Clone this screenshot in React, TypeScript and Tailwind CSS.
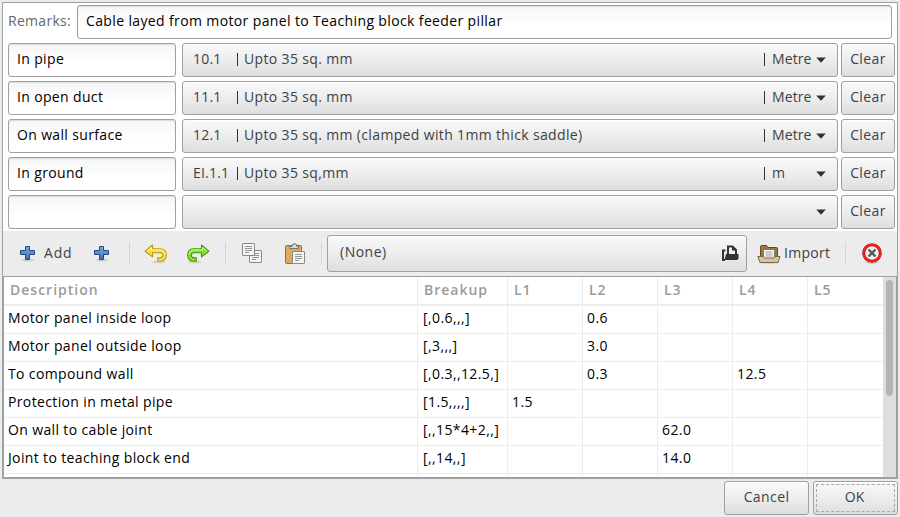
import React from "react";

const ITEMS = [
  { name: "In pipe", code: "10.1", text: "Upto 35 sq. mm", unit: "Metre" },
  { name: "In open duct", code: "11.1", text: "Upto 35 sq. mm", unit: "Metre" },
  { name: "On wall surface", code: "12.1", text: "Upto 35 sq. mm (clamped with 1mm thick saddle)", unit: "Metre" },
  { name: "In ground", code: "EI.1.1", text: "Upto 35 sq,mm", unit: "m" },
  { name: "", code: "", text: "", unit: "" },
];

const HEAD = ["Description", "Breakup", "L1", "L2", "L3", "L4", "L5"];

const ROWS = [
  ["Motor panel inside loop", "[,0.6,,,]", "", "0.6", "", "", ""],
  ["Motor panel outside loop", "[,3,,,]", "", "3.0", "", "", ""],
  ["To compound wall", "[,0.3,,12.5,]", "", "0.3", "", "12.5", ""],
  ["Protection in metal pipe", "[1.5,,,,]", "1.5", "", "", "", ""],
  ["On wall to cable joint", "[,,15*4+2,,]", "", "", "62.0", "", ""],
  ["Joint to teaching block end", "[,,14,,]", "", "", "14.0", "", ""],
  ["", "", "", "", "", "", ""],
];

const ENTRY =
  "border border-[#a0a0a0] rounded-[3px] bg-linear-to-b from-[#f5f5f5] to-white to-60% shadow-[inset_0_1px_1px_#dcdcdc] text-black";
const BUTTON =
  "border border-[#a0a0a0] rounded-[3px] bg-linear-to-b from-[#f9f9f9] via-[#ededed] to-[#dedede] shadow-[inset_0_1px_0_#ffffff]";

function Arrow() {
  return (
    <svg className="block" width="10" height="6" viewBox="0 0 10 6">
      <path d="M0.2 0.5H9.8L5 5.7Z" fill="#2e3436" />
    </svg>
  );
}

function Plus() {
  return (
    <svg className="block" width="16" height="17" viewBox="0 0 16 17">
      <defs>
        <linearGradient id="plus" x2="0" y2="1">
          <stop offset="0" stopColor="#7da7d8" />
          <stop offset="1" stopColor="#3f6fad" />
        </linearGradient>
      </defs>
      <ellipse cx="8" cy="15" rx="6" ry="1.6" fill="#000" opacity=".12" />
      <path d="M5.5 1.5h4v4h5v4h-5v5h-4v-5h-5v-4h5z" fill="url(#plus)" stroke="#204a87" strokeLinejoin="round" />
    </svg>
  );
}

function Undo({ redo = false }: { redo?: boolean }) {
  const edge = redo ? "#3e9a06" : "#bd9a00";
  const fill = redo ? "#8ae234" : "#f7e04a";
  return (
    <svg className={redo ? "block -scale-x-100" : "block"} width="24" height="20" viewBox="0 0 24 20">
      <ellipse cx="15" cy="18" rx="7" ry="1.3" fill="#000" opacity=".1" />
      <path
        d="M1.2 7.2 8.5 1v3.7h7.5c4 0 6.3 2.6 6.3 6.2 0 3.8-2.6 6.3-6.6 6.3h-2v-3.3h2c2 0 3.1-1.1 3.1-2.8s-1.1-2.4-2.8-2.4H8.5v4.2z"
        fill={fill}
        stroke={edge}
        strokeWidth="1.1"
        strokeLinejoin="round"
      />
      <path d="M3 7.2 7.5 3.3v2.5H16c3 0 5 1.8 5.2 4.6" fill="none" stroke="#fff" opacity=".65" />
    </svg>
  );
}

function Page({ x, y, w, h }: { x: number; y: number; w: number; h: number }) {
  return (
    <g>
      <rect x={x} y={y} width={w} height={h} rx="0.5" fill="#f4f4f2" stroke="#888a85" />
      <path d={`M${x + 2.5} ${y + 3}h7M${x + 2.5} ${y + 5}h7M${x + 2.5} ${y + 7}h7M${x + 2.5} ${y + 9}h4`} stroke="#959792" />
    </g>
  );
}

function Copy() {
  return (
    <svg className="block" width="22" height="22" viewBox="0 0 22 22">
      <Page x={8.5} y={7.5} w={12} h={12} />
      <Page x={1.5} y={0.5} w={12} h={12} />
    </svg>
  );
}

function Paste() {
  return (
    <svg className="block" width="22" height="22" viewBox="0 0 22 22">
      <rect x="1.5" y="2.5" width="16" height="18" rx="1" fill="#e0a85a" stroke="#a46a1c" />
      <path d="M5.500 5.500v-2h2.500l1-2.500h3l1 2.500h1.500v2z" fill="#d7d9d4" stroke="#777973" />
      <Page x={8.5} y={8.5} w={12} h={12} />
    </svg>
  );
}

function OpenFile() {
  return (
    <svg className="block" width="17" height="16" viewBox="0 0 17 16">
      <path d="M3.500 5.500H1V15h2" stroke="#2e3436" strokeWidth="2" fill="none" />
      <path d="M6 10V1.500h4.500L14 5v5" stroke="#2e3436" strokeWidth="2" fill="none" />
      <path d="M10 1.500V5.500H14z" fill="#2e3436" />
      <path d="M4 9h12.500v3.500a2 2 0 0 1-2 2.500H2.500z" fill="#2e3436" />
    </svg>
  );
}

function Folder() {
  return (
    <svg className="block" width="24" height="20" viewBox="0 0 24 20">
      <ellipse cx="12" cy="18.500" rx="10" ry="1.200" fill="#000" opacity=".18" />
      <path d="M3.500 14V2.500q0-1 1-1h5l1.500 2h8.500q1 0 1 1V14z" fill="#98754a" stroke="#684b22" />
      <rect x="6.500" y="5.500" width="11" height="9" fill="#f6f6f4" stroke="#777973" />
      <path d="M8.500 8h7M8.500 10h7M8.500 12h7" stroke="#a2a49f" />
      <path d="M0.800 12.500H6l1.500 1.500h9.500l1.500-1.500h4.500l-2 6H3z" fill="#d5c5a6" stroke="#7d6440" strokeLinejoin="round" />
    </svg>
  );
}

function Stop() {
  return (
    <svg className="block" width="20" height="21" viewBox="0 0 20 21">
      <ellipse cx="10" cy="19.500" rx="7" ry="1.200" fill="#000" opacity=".15" />
      <circle cx="10" cy="10" r="8.300" fill="#f4f4f4" stroke="#c40f0f" strokeWidth="3" />
      <circle cx="10" cy="10" r="8.300" fill="none" stroke="#ef2929" strokeWidth="1.600" />
      <path d="M6.500 6.500l7 7M13.500 6.500l-7 7" stroke="#555753" strokeWidth="2.400" />
    </svg>
  );
}

function Separator() {
  return <div className="h-[23px] w-px shrink-0 bg-[#d6d6d6]" />;
}

function Bar({ show }: { show: boolean }) {
  return <span className="shrink-0 pt-[3px]">{show && <i className="block h-[13px] w-px bg-[#2e3436]" />}</span>;
}

export default function App() {
  return (
    <div className="h-[517px] w-[900px] overflow-hidden bg-[#ececec] pt-[2px] pl-[2px] font-['Open_Sans','Noto_Sans',sans-serif] text-[14px] leading-[18px] font-normal whitespace-pre text-[#3c4244]">
      <div className="flex h-[477px] w-[896px] flex-col border border-[#a0a0a0] bg-[#ececec]">
        <div className="h-[228px] shrink-0 bg-white pt-[2px] pl-[5px]">
          <div className="flex h-[34px]">
            <span className="w-[69px] pt-[7px] tracking-[0.3px] text-[#62686a]">Remarks:</span>
            <div className={`${ENTRY} w-[815px] pt-[6px] pl-2 tracking-[0.37px]`}>
              Cable layed from motor panel to Teaching block feeder pillar
            </div>
          </div>
          <div className="mt-1 flex flex-col gap-1">
            {ITEMS.map((it, i) => (
              <div key={i} className="flex h-[34px]">
                <div className={`${ENTRY} w-[168px] pt-[6px] pl-2 tracking-[0.35px]`}>{it.name}</div>
                <div className={`${BUTTON} ml-[6px] flex w-[656px] pt-[6px] pl-[10px]`}>
                  <span className="w-[44px] shrink-0 tracking-[0.2px]">{it.code}</span>
                  <Bar show={it.text !== ""} />
                  <span className="flex-1 pl-[6px] tracking-[0.35px]">{it.text}</span>
                  <span className="flex w-[52px] shrink-0">
                    <Bar show={it.unit !== ""} />
                    <span className="pl-[7px] tracking-[0.1px]">{it.unit}</span>
                  </span>
                  <span className="w-[21px] shrink-0 pt-[7px]"><Arrow /></span>
                </div>
                <div className={`${BUTTON} ml-[3px] w-[54px] pt-[6px] text-center tracking-[0.4px]`}>Clear</div>
              </div>
            ))}
          </div>
        </div>
        <div className="flex h-[45px] shrink-0 items-center pl-[17px]">
          <Plus />
          <span className="mb-[2px] ml-2 w-[50px] tracking-[0.8px]">Add</span>
          <Plus />
          <div className="w-[19px]" />
          <Separator />
          <div className="ml-[14px]"><Undo /></div>
          <div className="ml-[18px]"><Undo redo /></div>
          <div className="w-[15px]" />
          <Separator />
          <div className="ml-[15px]"><Copy /></div>
          <div className="ml-[21px]"><Paste /></div>
          <div className="w-[15px]" />
          <Separator />
          <div className={`${BUTTON} ml-[5px] flex h-[37px] w-[420px] pt-[7px] pl-3`}>
            <span className="w-[382px] tracking-[0.5px]">(None)</span>
            <span className="pt-[2px]"><OpenFile /></span>
          </div>
          <div className="ml-[10px]"><Folder /></div>
          <span className="mb-[2px] ml-[3px] w-[61px] tracking-[0.3px]">Import</span>
          <Separator />
          <div className="ml-4"><Stop /></div>
        </div>
        <div className="flex h-[202px] shrink-0 overflow-hidden border border-[#a0a0a0] bg-white">
          <div className="h-[200px] w-[879px] overflow-hidden">
            <div className="grid h-[29px] grid-cols-[414px_90px_75px_75px_75px_75px_75px] border-b-2 border-[#ececec] font-semibold text-[#999c9c]">
              {HEAD.map((h, i) => (
                <div key={h} className={`pt-[4px] pl-[6px] tracking-[1px] ${i < 6 ? "border-r border-[#ececec]" : ""}`}>{h}</div>
              ))}
            </div>
            {ROWS.map((r, k) => (
              <div key={k} className="grid h-[28px] grid-cols-[414px_90px_75px_75px_75px_75px_75px] text-black">
                {r.map((c, i) => (
                  <div key={i} className={`border-b border-[#ececec] pt-[3px] ${i === 1 ? "pl-[5px]" : "pl-[4px]"} ${i === 0 ? "tracking-[0.36px]" : "tracking-[0.4px]"} ${i < 6 ? "border-r" : ""}`}>{c}</div>
                ))}
              </div>
            ))}
          </div>
          <div className="h-[200px] w-[13px] bg-[#dedede] pt-[3px] pl-[3px]">
            <div className="h-[116px] w-[7px] rounded-full bg-[#b2b4b6]" />
          </div>
        </div>
      </div>
      <div className="mt-[2px] flex gap-1 pl-[722px]">
        <div className={`${BUTTON} h-[34px] w-[85px] pt-[6px] text-center tracking-[0.4px]`}>Cancel</div>
        <div className={`${BUTTON} h-[34px] w-[85px] p-[2px] text-center`}>
          <div className="h-[28px] border border-dashed border-[#a8a8a8] pt-[3px] pr-[2px]">OK</div>
        </div>
      </div>
    </div>
  );
}
